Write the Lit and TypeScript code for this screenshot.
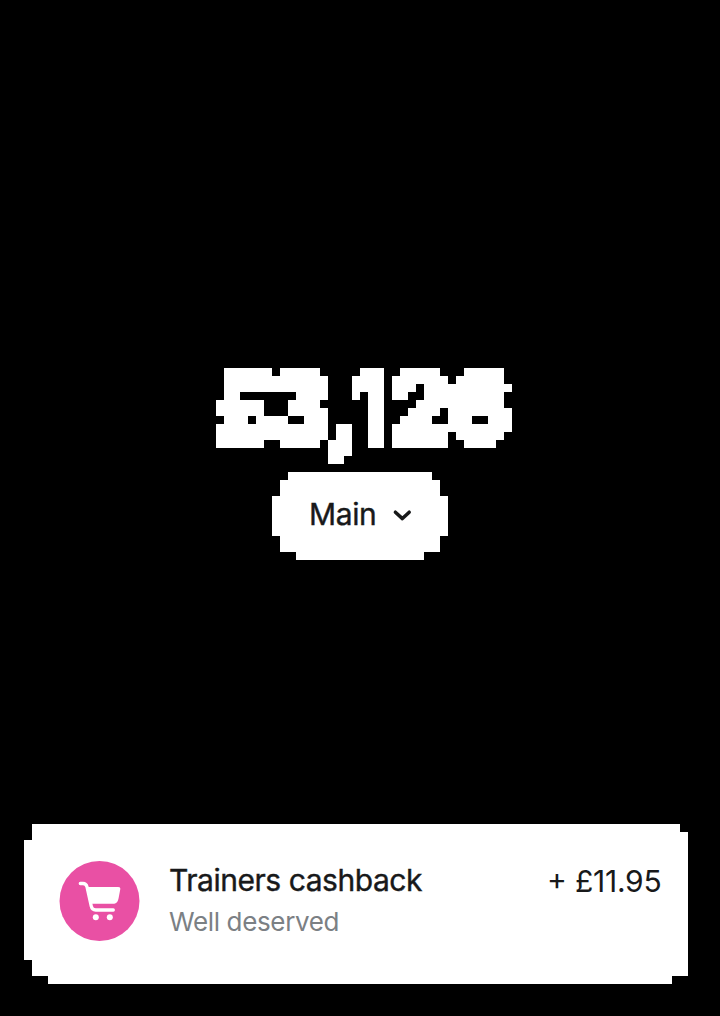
import { LitElement, html, css } from "lit";
import { customElement } from "lit/decorators.js";

@customElement("app-root")
export class AppRoot extends LitElement {
  static styles = css`
    :host {
      display: grid;
      grid-template-rows: 472px 96px 1fr;
      justify-items: center;
      box-sizing: border-box;
      width: 720px;
      height: 1016px;
      padding-bottom: 32px;
      overflow: hidden;
      background: #000;
      color: #18191a;
      font-family: Inter, "Liberation Sans", sans-serif;
    }
    svg { display: block; }
    .balance {
      align-self: end;
      width: 720px;
      height: 128px;
      font-weight: 700;
      font-size: 96px;
      fill: #fff;
    }
    .heavy { font-weight: 800; }
    .account {
      display: flex;
      align-items: center;
      align-self: start;
      box-sizing: border-box;
      width: 176px;
      height: 88px;
      padding: 0 36px 2px 37px;
      justify-content: space-between;
      border: 0;
      background: #fff;
      color: inherit;
      font: 400 30px/36px Inter, "Liberation Sans", sans-serif;
      letter-spacing: -0.4px;
      -webkit-text-stroke: 0.4px #18191a;
      clip-path: polygon(16px 0, 160px 0, 160px 8px, 168px 8px, 168px 24px, 176px 24px, 176px 64px, 168px 64px, 168px 80px, 152px 80px, 152px 88px, 24px 88px, 24px 80px, 8px 80px, 8px 64px, 0 64px, 0 24px, 8px 24px, 8px 8px, 16px 8px);
    }
    .account span { margin-top: -2px; }
    .card {
      display: grid;
      grid-template-columns: 80px 1fr auto;
      column-gap: 30px;
      align-self: end;
      justify-self: start;
      box-sizing: border-box;
      width: 664px;
      height: 160px;
      margin-left: 24px;
      padding: 37px 26px 0 35px;
      background: #fff;
      clip-path: polygon(8px 0, 656px 0, 656px 8px, 664px 8px, 664px 152px, 648px 152px, 648px 160px, 24px 160px, 24px 152px, 8px 152px, 8px 136px, 0 136px, 0 16px, 8px 16px);
    }
    .title {
      font: 400 30px/38px Inter, sans-serif;
      letter-spacing: -0.46px;
      -webkit-text-stroke: 0.4px #18191a;
      white-space: nowrap;
    }
    .note { font: 400 26px/34px Inter, sans-serif; letter-spacing: -0.35px; color: #7b8084; margin-top: 6px; }
    .amount {
      font: 400 30px/38px Inter, sans-serif;
      font-feature-settings: "case";
      letter-spacing: -0.25px;
      margin-top: 1px;
      margin-right: 0.6px;
      white-space: nowrap;
    }
  `;

  render() {
    return html`
      <svg class="balance" viewBox="0 344 720 128" role="img" aria-label="£3,126">
        <defs>
          <filter id="mosaic" filterUnits="userSpaceOnUse" primitiveUnits="userSpaceOnUse"
            x="200" y="344" width="328" height="128" color-interpolation-filters="sRGB">
            <feOffset in="SourceGraphic" dx="1" dy="0" result="a" />
            <feOffset in="SourceGraphic" dx="0" dy="1" result="b" />
            <feOffset in="SourceGraphic" dx="1" dy="1" result="c" />
            <feMerge>
              <feMergeNode in="SourceGraphic" /><feMergeNode in="a" />
              <feMergeNode in="b" /><feMergeNode in="c" />
            </feMerge>
            <feMorphology operator="dilate" radius="3" result="spread" />
            <feFlood x="204" y="348" width="1" height="1" flood-color="#fff" />
            <feComposite operator="over" in2="SourceGraphic" x="200" y="344" width="8" height="8" />
            <feTile result="grid" />
            <feComposite in="spread" in2="grid" operator="in" result="dots" />
            <feOffset in="dots" dx="-1" dy="0" result="d" />
            <feOffset in="dots" dx="0" dy="-1" result="e" />
            <feOffset in="dots" dx="-1" dy="-1" result="f" />
            <feMerge>
              <feMergeNode in="dots" /><feMergeNode in="d" />
              <feMergeNode in="e" /><feMergeNode in="f" />
            </feMerge>
            <feMorphology operator="dilate" radius="3" />
            <feComponentTransfer><feFuncA type="discrete" tableValues="0 1 1 1" /></feComponentTransfer>
          </filter>
        </defs>
        <text y="441.5" filter="url(#mosaic)"><tspan class="heavy"
          x="213.8 267" y="441 442.2">£3</tspan><tspan
          x="328 348 389 448" y="441 441 441 441.3">,126</tspan></text>
      </svg>

      <button class="account">
        <span>Main</span>
        <svg width="20" height="12" viewBox="0 0 20 12" fill="none" stroke="#18191a"
          stroke-width="3.5" stroke-linecap="round" stroke-linejoin="round">
          <path d="M3.4 3.2 10.4 9.6 17.2 3.2" />
        </svg>
      </button>

      <section class="card">
        <svg width="81" height="80" viewBox="0 0 81 80">
          <circle cx="40.5" cy="40" r="40" fill="#e950a4" />
          <path d="M21.3 22.5h2.7c2.3 0 3.4 1.2 4 3.4l4.3 19.4c.5 2.6 1.8 3.7 4.4 3.7h17.6"
            fill="none" stroke="#fff" stroke-width="3.3" stroke-linecap="round" />
          <path d="M28 26h31.2c1.6 0 2.3.8 2.1 2l-1.8 9.6c-.7 3.7-2.3 5.2-5.5 5.2H32z" fill="#fff" />
          <circle cx="36.8" cy="56.3" r="3" fill="#fff" />
          <circle cx="50.8" cy="56.3" r="3" fill="#fff" />
        </svg>
        <div>
          <div class="title">Trainers cashback</div>
          <div class="note">Well deserved</div>
        </div>
        <div class="amount">+ £11.95</div>
      </section>
    `;
  }
}
